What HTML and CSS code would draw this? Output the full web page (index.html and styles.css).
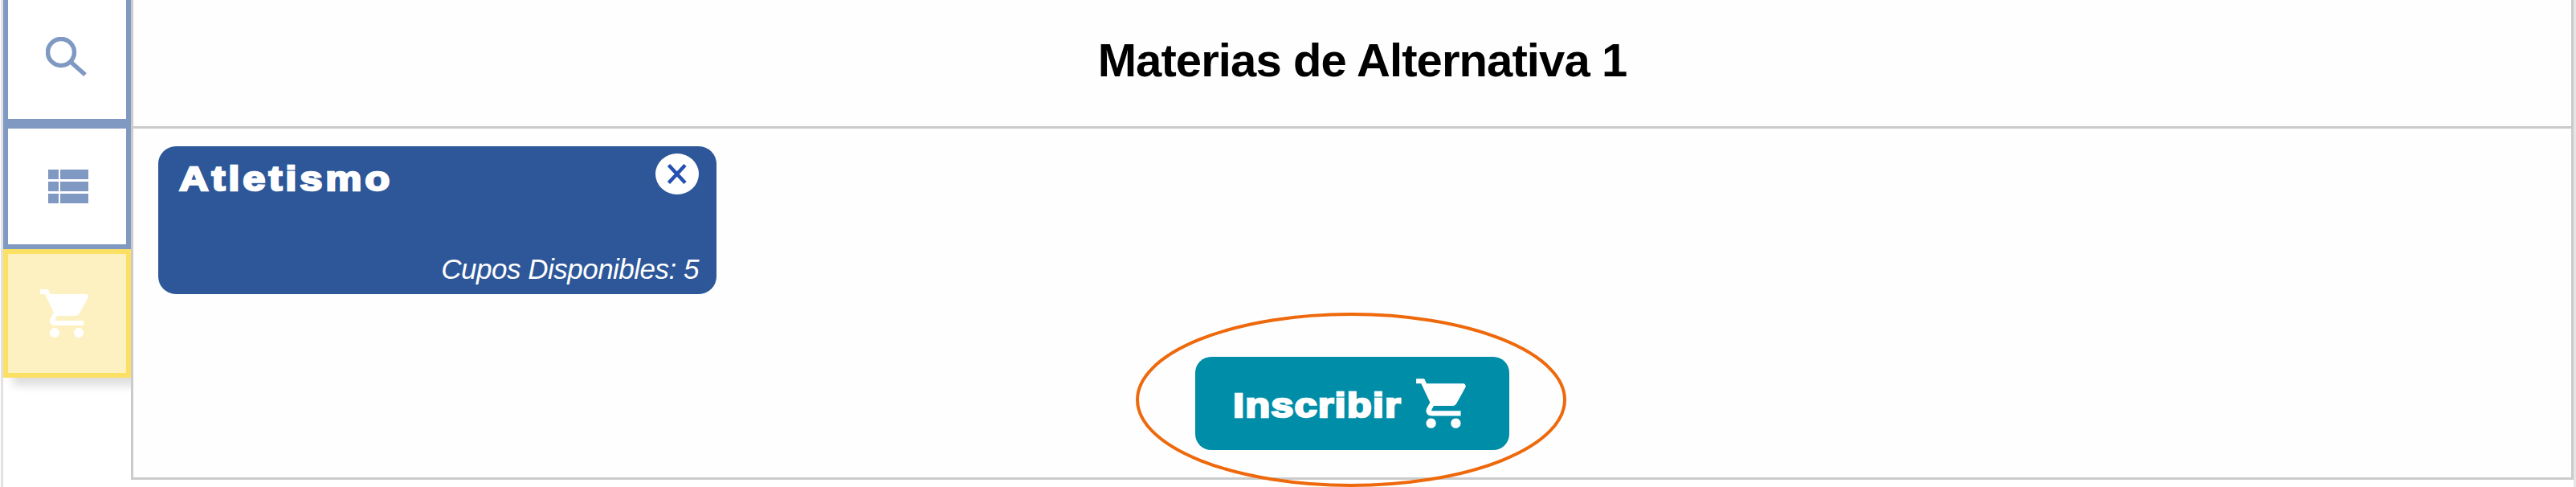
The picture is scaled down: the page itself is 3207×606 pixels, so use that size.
FILE: index.html
```
<!DOCTYPE html>
<html lang="es">
<head>
<meta charset="utf-8">
<title>Materias de Alternativa 1</title>
<link rel="stylesheet" href="styles.css">
</head>
<body>
<div class="app">
  <nav class="sidebar">
    <div class="tab tab-search">
      <svg class="icon-search" viewBox="0 0 52 50"><circle cx="19" cy="19" r="16.500"/><path d="M31 31L49 47"/></svg>
    </div>
    <div class="tab tab-list">
      <svg class="icon-list" viewBox="0 0 50 44"><path d="M0 1h13v12H0zM15 1h35v12H15zM0 16h13v12H0zM15 16h35v12H15zM0 31h13v12H0zM15 31h35v12H15z"/></svg>
    </div>
    <div class="tab tab-cart">
      <svg class="icon-cart" viewBox="0 0 24 24"><path d="M7 18c-1.1 0-1.99.9-1.99 2S5.9 22 7 22s2-.9 2-2-.9-2-2-2zM1 2v2h2l3.6 7.59-1.35 2.45c-.16.28-.25.61-.25.96 0 1.1.9 2 2 2h12v-2H7.42c-.14 0-.25-.11-.25-.25l.03-.12.9-1.63h7.45c.75 0 1.41-.41 1.75-1.03l3.58-6.49c.08-.14.12-.31.12-.48 0-.55-.45-1-1-1H5.21l-.94-2H1zm16 16c-1.1 0-1.99.9-1.99 2s.89 2 1.99 2 2-.9 2-2-.9-2-2-2z"/></svg>
    </div>
  </nav>
  <main class="panel">
    <header class="panel-header"><h1 class="panel-title">Materias de Alternativa 1</h1></header>
    <section class="panel-body">
      <article class="card">
        <div class="card-top">
          <h2 class="card-title">Atletismo</h2>
          <svg class="card-close" viewBox="0 0 54 51"><ellipse cx="27" cy="25.5" rx="27" ry="25.5"/><path d="M16.500 14.500L37 36.500M37 14.500L16.500 36.500"/></svg>
        </div>
        <p class="card-seats">Cupos Disponibles: 5</p>
      </article>
      <div class="actions">
        <button class="enroll" type="button">
          <span class="enroll-label">Inscribir</span>
          <svg class="enroll-icon" viewBox="0 0 24 24"><path d="M7 18c-1.1 0-1.99.9-1.99 2S5.9 22 7 22s2-.9 2-2-.9-2-2-2zM1 2v2h2l3.6 7.59-1.35 2.45c-.16.28-.25.61-.25.96 0 1.1.9 2 2 2h12v-2H7.42c-.14 0-.25-.11-.25-.25l.03-.12.9-1.63h7.45c.75 0 1.41-.41 1.75-1.03l3.58-6.49c.08-.14.12-.31.12-.48 0-.55-.45-1-1-1H5.21l-.94-2H1zm16 16c-1.1 0-1.99.9-1.99 2s.89 2 1.99 2 2-.9 2-2-.9-2-2-2z"/></svg>
          <svg class="highlight" viewBox="0 0 536 217"><ellipse cx="268" cy="108.500" rx="266" ry="106.500"/></svg>
        </button>
      </div>
    </section>
  </main>
</div>
</body>
</html>
```
FILE: styles.css
```
* { box-sizing: border-box; }
body { margin: 0; background: #fff; font-family: "Liberation Sans", Arial, sans-serif; }
h1, h2, p { margin: 0; }
svg { display: block; flex: none; }
.app {
  display: flex;
  height: 606px;
  padding-left: 1px;
  border-right: 3px solid #e6e6e6;
  overflow: hidden;
}
.sidebar {
  width: 162px;
  border-left: 3px solid #e2e2e2;
  overflow: hidden;
}
.tab { width: 159px; border: 6px solid #8099c2; fill: #8099c2; }
.tab-search { height: 154px; border-top: 0; padding: 46px 0 0 47px; }
.tab-list { height: 156px; padding: 50px 0 0 50px; }
.tab-cart {
  height: 160px;
  padding: 38px 0 0 37px;
  border-color: #fbe064;
  background: #fdf1c1;
  fill: #fff;
  box-shadow: 12px 10px 10px rgba(0, 0, 0, .13);
}
.icon-search { width: 52px; height: 50px; fill: none; stroke: #8099c2; stroke-width: 5.5; }
.icon-list { width: 50px; height: 44px; }
.icon-cart { width: 72px; height: 72px; }
.panel {
  flex: 1;
  height: 597px;
  border: 3px solid #cbcbcb;
  border-top: 0;
  background: #fefefe;
}
.panel-header {
  height: 160px;
  border-bottom: 3px solid #cbcbcb;
  padding-top: 42px;
  padding-left: 25px;
  text-align: center;
}
.panel-title {
  font-size: 58px;
  line-height: 66px;
  font-weight: bold;
  letter-spacing: -.9px;
  color: #000;
}
.panel-body { padding: 22px 31px 0; }
.card {
  width: 695px;
  height: 184px;
  padding: 9px 22px 0 26px;
  border-radius: 22px;
  background: #2d5799;
  color: #fff;
}
.card-top { display: flex; justify-content: space-between; height: 124px; }
.card-title, .enroll-label {
  font: bold 43px/52px "Liberation Sans", Arial, sans-serif;
  -webkit-text-stroke: 2.4px #fff;
  transform: scaleX(1.18);
  transform-origin: 0 50%;
  white-space: nowrap;
}
.card-title { padding-top: 5px; letter-spacing: 3.3px; }
.card-close { width: 54px; height: 51px; fill: #fff; }
.card-close path { stroke: #2450b0; stroke-width: 4.5; }
.card-seats {
  font-size: 35px;
  line-height: 40px;
  font-style: italic;
  letter-spacing: -.5px;
  text-align: right;
}
.actions { padding: 78px 0 0 1291px; }
.enroll {
  position: relative;
  display: flex;
  align-items: center;
  gap: 16px;
  width: 391px;
  height: 116px;
  padding: 0 0 0 47px;
  border: 0;
  border-radius: 20px;
  background: #008da8;
  color: #fff;
  fill: #fff;
}
.enroll-label {
  width: 209px;
  padding-top: 3px;
  letter-spacing: .9px;
  text-align: left;
}
.enroll-icon { width: 74px; height: 74px; }
.highlight {
  position: absolute;
  left: -74px;
  top: -55px;
  width: 536px;
  height: 217px;
  fill: none;
  stroke: #ee690c;
  stroke-width: 4;
  pointer-events: none;
}
```
